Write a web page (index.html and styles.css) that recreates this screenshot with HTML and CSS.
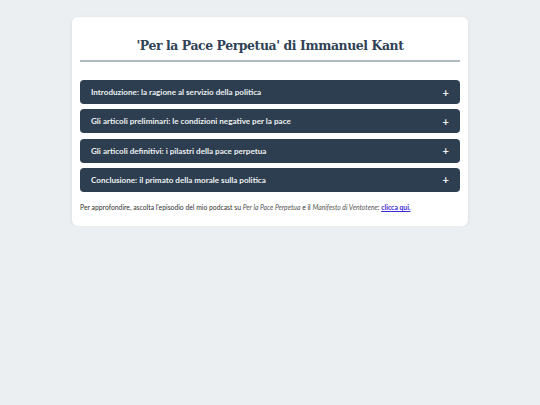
FILE: index.html
```html
<!DOCTYPE html>
<html lang="it">
<head>
<meta charset="utf-8">
<title>Per la Pace Perpetua</title>
<link rel="stylesheet" href="styles.css">
</head>
<body>
<main class="card">
  <h1 class="title">'Per la Pace Perpetua' di Immanuel Kant</h1>
  <div class="accordion">
    <div class="item"><span>Introduzione: la ragione al servizio della politica</span><span class="plus">+</span></div>
    <div class="item"><span>Gli articoli preliminari: le condizioni negative per la pace</span><span class="plus">+</span></div>
    <div class="item"><span>Gli articoli definitivi: i pilastri della pace perpetua</span><span class="plus">+</span></div>
    <div class="item"><span>Conclusione: il primato della morale sulla politica</span><span class="plus">+</span></div>
  </div>
  <p class="note">Per approfondire, ascolta l'episodio del mio podcast su <em>Per la Pace Perpetua</em> e il <em>Manifesto di Ventotene</em>: <a href="#">clicca qui.</a></p>
</main>
</body>
</html>
```
FILE: styles.css
```css
html, body {
  margin: 0;
  padding: 0;
  background: #eceff1;
}
body {
  font-family: Lato, "Noto Sans", sans-serif;
  padding-top: 17px;
}
.card {
  width: 396px;
  margin: 0 auto;
  background: #ffffff;
  border-radius: 6px;
  box-shadow: 0 1px 4px rgba(0,0,0,0.08);
  padding: 18px 8px 14px;
  box-sizing: border-box;
}
.title {
  margin: 0;
  font-family: "DejaVu Serif", serif;
  font-stretch: condensed;
  font-weight: bold;
  font-size: 13.8px;
  letter-spacing: -0.4px;
  color: #2f4256;
  text-align: center;
  padding-bottom: 5px;
  border-bottom: 2px solid #b0bac1;
  line-height: 20px;
}
.accordion {
  display: flex;
  flex-direction: column;
  gap: 5.3px;
  margin-top: 18px;
}
.item {
  display: flex;
  justify-content: space-between;
  align-items: center;
  height: 24px;
  padding: 0 11px 0 11px;
  background: #2c3e50;
  color: #ecf0f1;
  border-radius: 4px;
  font-size: 8.1px;
  font-weight: bold;
}
.plus {
  font-size: 11px;
  font-weight: bold;
  line-height: 1;
}
.note {
  margin: 10px 0 0;
  font-size: 6.8px;
  font-weight: normal;
  color: #333;
  line-height: 10px;
}
.note em {
  color: #555;
}
.note a {
  color: #3a2ad6;
  font-weight: bold;
  text-decoration: underline;
}
```
